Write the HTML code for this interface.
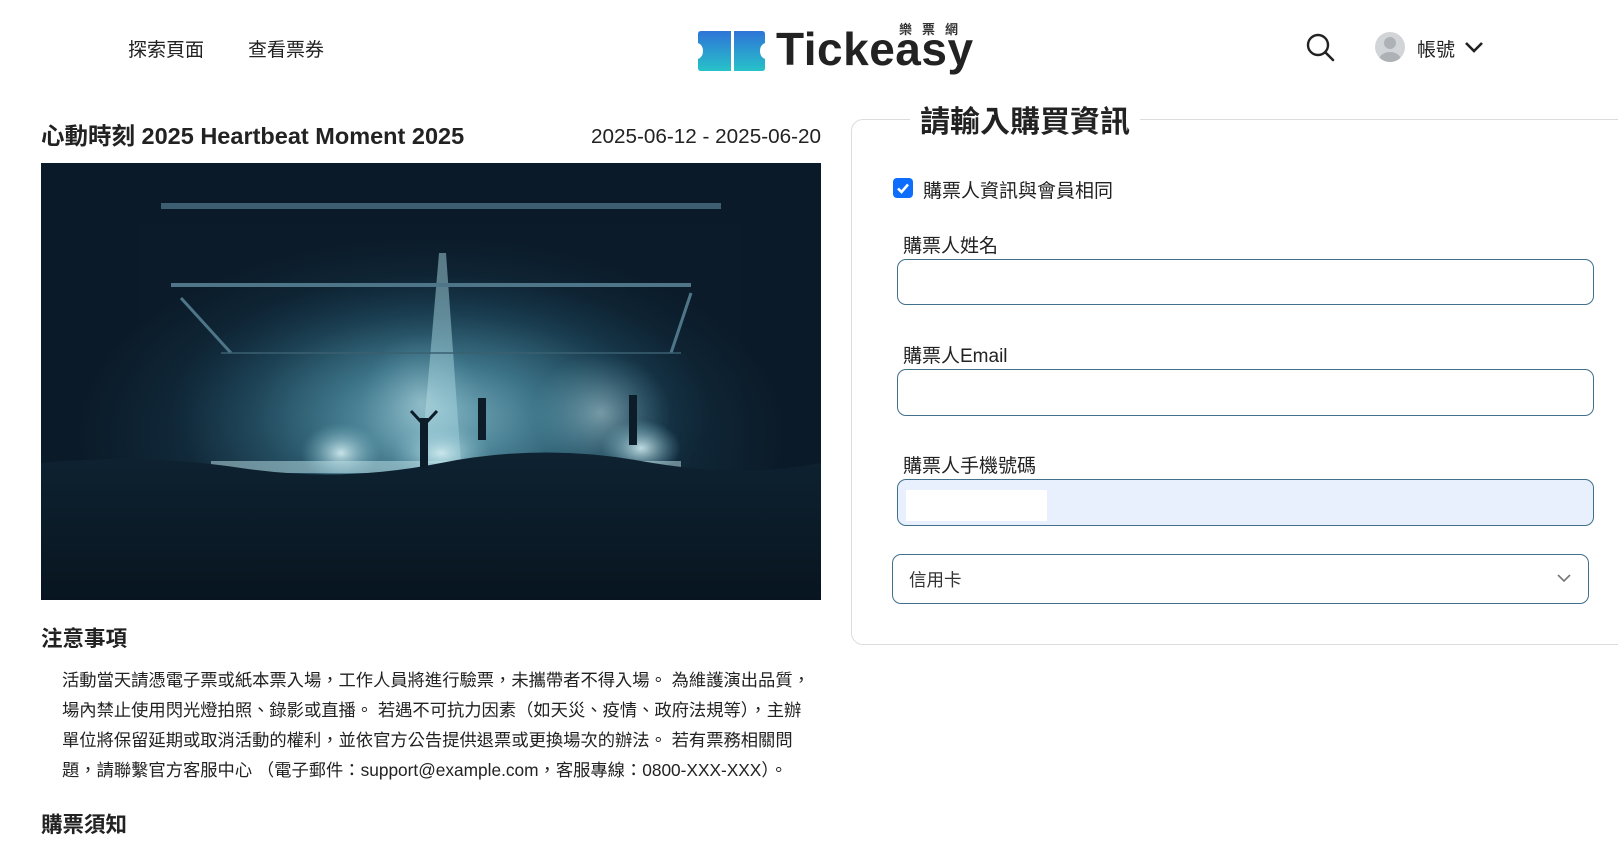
<!DOCTYPE html>
<html><head><meta charset="utf-8"><style>
*{margin:0;padding:0;box-sizing:border-box}
body{width:1618px;height:847px;overflow:hidden;background:#fff;font-family:"Liberation Sans","Noto Sans CJK TC",sans-serif;color:#222;position:relative}
.a{position:absolute;white-space:nowrap}
.inp{position:absolute;border:1.5px solid #41708c;border-radius:9px;background:#fff}
.lbl{position:absolute;font-size:19px;color:#222}
</style></head><body>
<div class="a" style="left:128px;top:35px;font-size:19px">探索頁面</div>
<div class="a" style="left:248px;top:35px;font-size:19px">查看票券</div>

<svg class="a" style="left:698px;top:31px" width="68" height="40" viewBox="0 0 68 40">
<defs><linearGradient id="lg" x1="0" y1="0" x2="0" y2="1"><stop offset="0" stop-color="#2f74d8"/><stop offset="1" stop-color="#27c2c8"/></linearGradient></defs>
<path d="M3 0H33V40H3Q0 40 0 37V28Q5 26 5 20Q5 14 0 12V3Q0 0 3 0Z" fill="url(#lg)"/>
<path d="M36 0H64Q67 0 67 3V12Q62 14 62 20Q62 26 67 28V37Q67 40 64 40H36Z" fill="url(#lg)"/>
</svg>
<div class="a" style="left:776px;top:22px;font-size:46px;font-weight:bold;color:#222;letter-spacing:0.5px">Tickeasy</div>
<div class="a" style="left:899px;top:19px;font-size:13px;font-weight:bold;color:#333;letter-spacing:10px">樂票網</div>

<svg class="a" style="left:1306px;top:33px" width="30" height="30" viewBox="0 0 30 30"><circle cx="12" cy="12" r="10" fill="none" stroke="#222" stroke-width="2.4"/><path d="M19.5 19.5L27 27" stroke="#222" stroke-width="2.6" stroke-linecap="round"/></svg>
<svg class="a" style="left:1375px;top:32px" width="30" height="30" viewBox="0 0 30 30"><defs><clipPath id="c"><circle cx="15" cy="15" r="15"/></clipPath></defs><circle cx="15" cy="15" r="15" fill="#d2d5d8"/><g clip-path="url(#c)" fill="#aeb2b6"><circle cx="15" cy="11" r="6"/><ellipse cx="15" cy="28" rx="11" ry="8"/></g></svg>
<div class="a" style="left:1417px;top:35px;font-size:19px">帳號</div>
<svg class="a" style="left:1464px;top:40px" width="20" height="14" viewBox="0 0 20 14"><path d="M2 3L10 11L18 3" fill="none" stroke="#222" stroke-width="2.6"/></svg>

<div class="a" style="left:41px;top:117px;font-size:23.5px;font-weight:bold">心動時刻 2025 Heartbeat Moment 2025</div>
<div class="a" style="right:797px;top:125px;font-size:20.7px">2025-06-12 - 2025-06-20</div>

<svg class="a" style="left:41px;top:163px" width="780" height="437" viewBox="0 0 780 437">
<defs>
<radialGradient id="g1" cx="0.5" cy="0.62" r="0.45"><stop offset="0" stop-color="#7fb3c2"/><stop offset="0.35" stop-color="#3d7488"/><stop offset="0.7" stop-color="#16374a"/><stop offset="1" stop-color="#0b1b29"/></radialGradient>
<linearGradient id="cr" x1="0" y1="0" x2="0" y2="1"><stop offset="0" stop-color="#0e2231"/><stop offset="1" stop-color="#081520"/></linearGradient>
<radialGradient id="s" cx="0.5" cy="0.5" r="0.5"><stop offset="0" stop-color="#d8f0f4" stop-opacity="0.9"/><stop offset="1" stop-color="#6fb0c0" stop-opacity="0"/></radialGradient>
</defs>
<rect width="780" height="437" fill="#0b1a28"/>
<rect x="100" y="60" width="600" height="300" fill="url(#g1)"/>
<rect width="780" height="437" fill="url(#g1)" opacity="0.5"/>
<polygon points="398,90 405,90 420,300 380,300" fill="#a8d6e0" opacity="0.5"/>
<ellipse cx="300" cy="290" rx="40" ry="30" fill="url(#s)"/>
<ellipse cx="400" cy="290" rx="50" ry="30" fill="url(#s)"/>
<ellipse cx="600" cy="285" rx="40" ry="28" fill="url(#s)"/>
<ellipse cx="560" cy="250" rx="70" ry="60" fill="url(#s)" opacity="0.5"/>
<ellipse cx="380" cy="240" rx="60" ry="70" fill="url(#s)" opacity="0.4"/>
<rect x="120" y="40" width="560" height="6" fill="#3c5e70"/>
<rect x="130" y="120" width="520" height="4" fill="#4f7688"/>
<path d="M140 135L190 190M650 130L630 190" stroke="#4f7688" stroke-width="3"/>
<path d="M180 190H640" stroke="#3a6070" stroke-width="1.5"/>
<rect x="170" y="298" width="470" height="12" fill="#bfe3ea" opacity="0.5"/>
<path d="M0 300Q100 290 200 305T400 300T600 298T780 300V437H0Z" fill="url(#cr)"/>
<rect x="379" y="255" width="8" height="50" fill="#0c1c28"/>
<path d="M370 248L383 262L396 248" stroke="#0c1c28" stroke-width="3" fill="none"/>
<rect x="588" y="232" width="8" height="50" fill="#0c1c28"/>
<rect x="437" y="235" width="8" height="42" fill="#0c1c28"/>
</svg>

<div class="a" style="left:41px;top:622px;font-size:21.5px;font-weight:bold">注意事項</div>
<div class="a" style="left:62px;top:665px;width:754px;white-space:normal;font-size:17.3px;line-height:30px;color:#222">活動當天請憑電子票或紙本票入場，工作人員將進行驗票，未攜帶者不得入場。 為維護演出品質，場內禁止使用閃光燈拍照、錄影或直播。 若遇不可抗力因素（如天災、疫情、政府法規等），主辦單位將保留延期或取消活動的權利，並依官方公告提供退票或更換場次的辦法。 若有票務相關問題，請聯繫官方客服中心 （電子郵件：support@example.com，客服專線：0800-XXX-XXX）。</div>
<div class="a" style="left:41px;top:808px;font-size:21.5px;font-weight:bold">購票須知</div>

<div class="a" style="left:851px;top:119px;width:800px;height:526px;border:1.5px solid #dcdcdc;border-radius:12px"></div>
<div class="a" style="left:910px;top:97px;padding:0 10px;background:#fff;font-size:30px;font-weight:bold;color:#222">請輸入購買資訊</div>

<div class="a" style="left:893px;top:178px;width:20px;height:20px;background:#0d6efd;border-radius:4px"></div>
<svg class="a" style="left:893px;top:178px" width="20" height="20" viewBox="0 0 20 20"><path d="M5 10.5L8.5 14L15 6.5" fill="none" stroke="#fff" stroke-width="2.6"/></svg>
<div class="lbl" style="left:923px;top:176px">購票人資訊與會員相同</div>

<div class="lbl" style="left:903px;top:231px">購票人姓名</div>
<div class="inp" style="left:897px;top:259px;width:697px;height:46px"></div>
<div class="lbl" style="left:903px;top:341px">購票人Email</div>
<div class="inp" style="left:897px;top:369px;width:697px;height:47px"></div>
<div class="lbl" style="left:903px;top:451px">購票人手機號碼</div>
<div class="inp" style="left:897px;top:479px;width:697px;height:47px;background:#e8f0fe"></div>
<div class="a" style="left:906px;top:490px;width:141px;height:31px;background:#fff"></div>
<div class="inp" style="left:892px;top:554px;width:697px;height:50px"></div>
<div class="a" style="left:909px;top:567px;font-size:17.5px;color:#333">信用卡</div>
<svg class="a" style="left:1556px;top:573px" width="16" height="10" viewBox="0 0 16 10"><path d="M2 2L8 8L14 2" fill="none" stroke="#777" stroke-width="1.6"/></svg>
</body></html>
